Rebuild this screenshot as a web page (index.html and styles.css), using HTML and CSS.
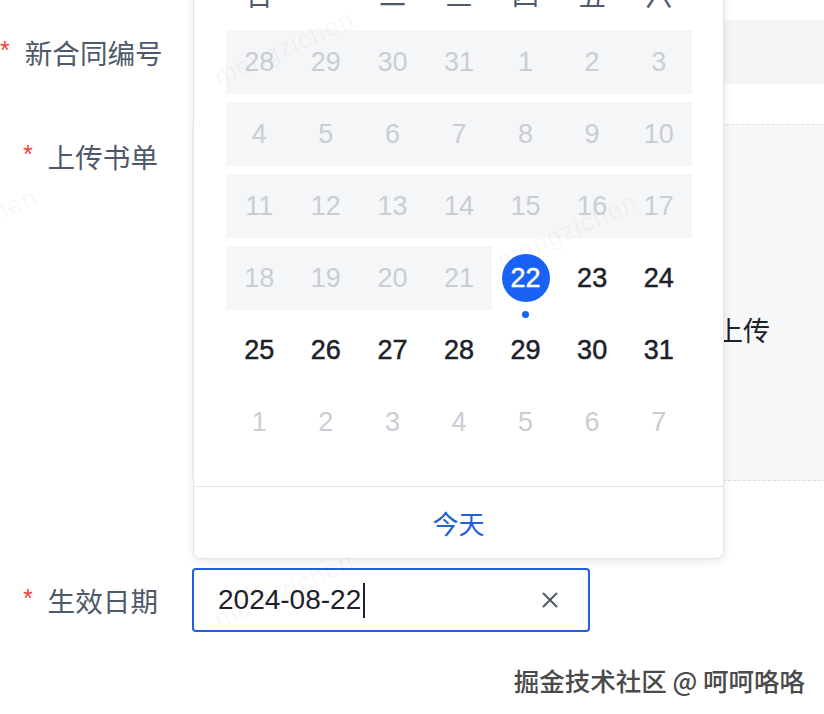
FILE: index.html
```html
<!DOCTYPE html>
<html lang="zh-CN">
<head>
<meta charset="utf-8">
<title>生效日期</title>
<link rel="stylesheet" href="styles.css">
</head>
<body>
<div class="page">
  <form class="form">
    <div class="row row-first">
      <label class="label"><span class="req">*</span><span>新合同编号</span></label>
      <div class="control">
        <div class="input input-disabled"></div>
      </div>
    </div>
    <div class="row row-upload">
      <label class="label"><span class="req">*</span><span>上传书单</span></label>
      <div class="control">
        <div class="upload"><span class="upload-text">点击上传</span></div>
      </div>
    </div>
    <div class="row">
      <label class="label"><span class="req">*</span><span>生效日期</span></label>
      <div class="control">
        <div class="input input-focus">
          <span class="value">2024-08-22<span class="caret"></span></span>
          <svg class="clear" width="18" height="18" viewBox="0 0 18 18" aria-hidden="true"><path d="M2.5 2.5 L15.5 15.5 M15.5 2.5 L2.5 15.5" stroke="#4e5969" stroke-width="2" stroke-linecap="round" fill="none"/></svg>
        </div>
      </div>
    </div>
  </form>

  <div class="picker">
    <div class="picker-nav">2024年 8月</div>
    <div class="week">
      <span>日</span><span>一</span><span>二</span><span>三</span><span>四</span><span>五</span><span>六</span>
    </div>
    <div class="days">
      <div class="cell off">28</div><div class="cell off">29</div><div class="cell off">30</div><div class="cell off">31</div><div class="cell off">1</div><div class="cell off">2</div><div class="cell off">3</div>
      <div class="cell off">4</div><div class="cell off">5</div><div class="cell off">6</div><div class="cell off">7</div><div class="cell off">8</div><div class="cell off">9</div><div class="cell off">10</div>
      <div class="cell off">11</div><div class="cell off">12</div><div class="cell off">13</div><div class="cell off">14</div><div class="cell off">15</div><div class="cell off">16</div><div class="cell off">17</div>
      <div class="cell off">18</div><div class="cell off">19</div><div class="cell off">20</div><div class="cell off">21</div><div class="cell on selected"><span class="circle">22</span><span class="dot"></span></div><div class="cell on">23</div><div class="cell on">24</div>
      <div class="cell on">25</div><div class="cell on">26</div><div class="cell on">27</div><div class="cell on">28</div><div class="cell on">29</div><div class="cell on">30</div><div class="cell on">31</div>
      <div class="cell next">1</div><div class="cell next">2</div><div class="cell next">3</div><div class="cell next">4</div><div class="cell next">5</div><div class="cell next">6</div><div class="cell next">7</div>
    </div>
    <div class="picker-foot"><span class="today">今天</span></div>
  </div>

  <div class="wm wm1">mengzichen</div>
  <div class="wm wm2">mengzichen</div>
  <div class="wm wm3">mengzichen</div>
  <div class="wm wm4">mengzichen</div>

  <div class="credit">掘金技术社区 @ 呵呵咯咯</div>
</div>
</body>
</html>
```
FILE: styles.css
```css
html, body {
  margin: 0;
  padding: 0;
  background: #ffffff;
}
body {
  width: 824px;
  height: 714px;
  overflow: hidden;
  font-family: "Liberation Sans", "Noto Sans CJK SC", sans-serif;
}
.page {
  position: relative;
  width: 824px;
  height: 714px;
  overflow: hidden;
}
.form {
  display: flex;
  flex-direction: column;
  padding-top: 20px;
  margin: 0;
}
.row {
  display: flex;
  align-items: flex-start;
  margin-bottom: 40px;
}
.row-upload {
  margin-bottom: 87px;
}
.label {
  flex: 0 0 158px;
  height: 64px;
  display: flex;
  align-items: center;
  justify-content: flex-end;
  white-space: nowrap;
  font-family: "Noto Sans CJK SC", sans-serif;
  font-size: 27.6px;
  color: #4e5969;
}
.req {
  font-family: "Liberation Sans", sans-serif;
  color: #f53f3f;
  font-size: 25px;
  margin-right: 15px;
  margin-top: -4px;
}
.control {
  flex: 0 0 700px;
  margin-left: 34px;
}
.input {
  box-sizing: border-box;
  height: 64px;
  border-radius: 4px;
  display: flex;
  align-items: center;
}
.input-disabled {
  width: 700px;
  background: #f4f5f7;
}
.input-focus {
  width: 398px;
  border: 2px solid #1f5fe0;
  background: #ffffff;
  justify-content: space-between;
  padding: 0 29px 0 24px;
}
.value {
  font-size: 28px;
  color: #1d2129;
  display: flex;
  align-items: center;
}
.caret {
  display: inline-block;
  width: 2px;
  height: 35px;
  background: #1d2129;
  margin-left: 2px;
}
.clear {
  display: block;
}
.upload {
  box-sizing: border-box;
  width: 1048px;
  height: 357px;
  background: #f7f8fa;
  border: 1px dashed #dcdfe4;
  border-left-color: transparent;
  border-radius: 4px;
  display: flex;
  justify-content: center;
  padding-top: 187px;
}
.upload-text {
  font-family: "Noto Sans CJK SC", sans-serif;
  font-size: 27px;
  line-height: 36px;
  color: #1d2129;
}

/* date picker popup */
.picker {
  position: absolute;
  left: 193px;
  top: -95px;
  width: 531px;
  box-sizing: border-box;
  background: #ffffff;
  border: 1px solid #e5e6eb;
  border-radius: 8px;
  box-shadow: 0 2px 10px rgba(0, 0, 0, 0.10);
  z-index: 2;
}
.picker-nav {
  box-sizing: border-box;
  height: 64px;
  border-bottom: 1px solid #e5e6eb;
  display: flex;
  align-items: center;
  justify-content: center;
  font-family: "Noto Sans CJK SC", sans-serif;
  font-size: 27px;
  color: #1d2129;
}
.week {
  display: grid;
  grid-template-columns: repeat(7, 1fr);
  height: 50px;
  padding: 0 31px 0 32px;
  font-family: "Noto Sans CJK SC", sans-serif;
  font-size: 27px;
  line-height: 50px;
  color: #4e5969;
  text-align: center;
}
.days {
  display: grid;
  grid-template-columns: repeat(7, 1fr);
  grid-auto-rows: 64px;
  row-gap: 8px;
  padding: 10px 31px 32px 32px;
}
.cell {
  position: relative;
  display: flex;
  align-items: center;
  justify-content: center;
  font-size: 27px;
}
.off {
  background: #f5f6f8;
  color: #c9cdd4;
}
.next {
  color: #c9cdd4;
}
.on {
  color: #1d2129;
  -webkit-text-stroke: 0.5px #1d2129;
}
.selected {
  -webkit-text-stroke: 0;
}
.circle {
  width: 48px;
  height: 48px;
  border-radius: 50%;
  background: #1a62f5;
  color: #ffffff;
  -webkit-text-stroke: 0.5px #ffffff;
  display: flex;
  align-items: center;
  justify-content: center;
}
.dot {
  position: absolute;
  left: 50%;
  top: calc(100% + 1px);
  width: 7px;
  height: 7px;
  margin-left: -3.5px;
  border-radius: 50%;
  background: #1a62f5;
}
.picker-foot {
  height: 71px;
  border-top: 1px solid #e5e6eb;
  display: flex;
  align-items: center;
  justify-content: center;
}
.today {
  font-family: "Noto Sans CJK SC", sans-serif;
  font-size: 26px;
  color: #2160d8;
}

/* watermark overlay */
.wm {
  position: absolute;
  font-family: "Liberation Sans", sans-serif;
  font-size: 26px;
  letter-spacing: 1px;
  color: rgba(0, 0, 0, 0.045);
  transform: rotate(-24deg);
  transform-origin: left bottom;
  white-space: nowrap;
  pointer-events: none;
  z-index: 3;
}
.wm1 { left: 222px; top: 62px; }
.wm2 { left: -95px; top: 240px; }
.wm3 { left: 505px; top: 245px; }
.wm4 { left: 222px; top: 604px; }

.credit {
  position: absolute;
  right: 19px;
  top: 661px;
  font-family: "Noto Sans CJK SC", sans-serif;
  font-size: 25.5px;
  font-weight: 500;
  line-height: 38px;
  color: #4a4a4a;
  text-shadow: 0 0 1px #ffffff, 0 0 2px #ffffff;
  z-index: 4;
}
```
